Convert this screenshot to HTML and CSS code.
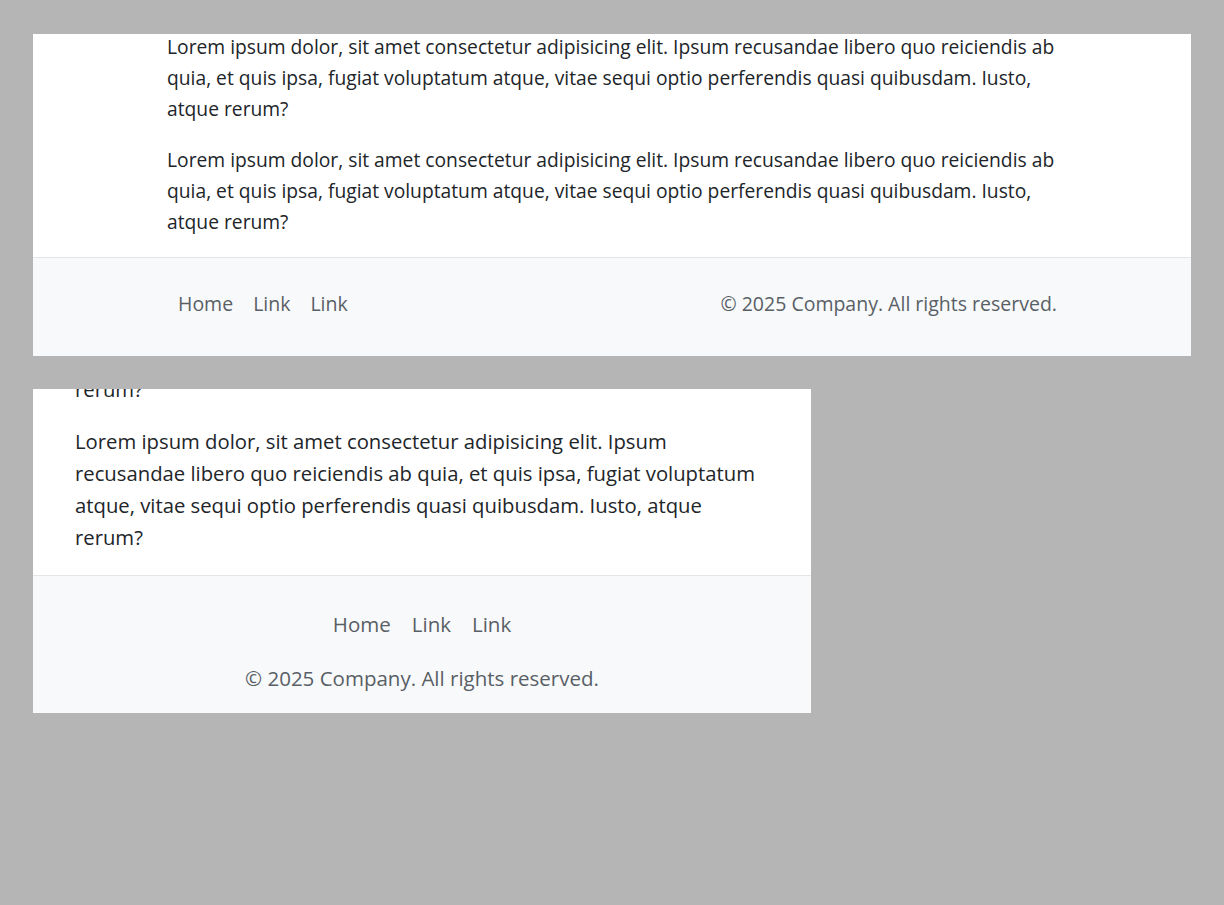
FILE: index.html
```html
<!DOCTYPE html>
<html lang="en">
<head>
<meta charset="utf-8">
<title>Footer previews</title>
<link rel="stylesheet" href="styles.css">
</head>
<body>
  <div class="frame frame-wide">
    <main class="content">
      <div class="container">
        <p>Lorem ipsum dolor, sit amet consectetur adipisicing elit. Ipsum recusandae libero quo reiciendis ab quia, et quis ipsa, fugiat voluptatum atque, vitae sequi optio perferendis quasi quibusdam. Iusto, atque rerum?</p>
        <p>Lorem ipsum dolor, sit amet consectetur adipisicing elit. Ipsum recusandae libero quo reiciendis ab quia, et quis ipsa, fugiat voluptatum atque, vitae sequi optio perferendis quasi quibusdam. Iusto, atque rerum?</p>
        <p>Lorem ipsum dolor, sit amet consectetur adipisicing elit. Ipsum recusandae libero quo reiciendis ab quia, et quis ipsa, fugiat voluptatum atque, vitae sequi optio perferendis quasi quibusdam. Iusto, atque rerum?</p>
      </div>
    </main>
    <footer class="footer">
      <div class="container footer-row">
        <nav class="footer-nav">
          <a href="#">Home</a>
          <a href="#">Link</a>
          <a href="#">Link</a>
        </nav>
        <p class="copyright">© 2025 Company. All rights reserved.</p>
      </div>
    </footer>
  </div>

  <div class="frame frame-narrow">
    <main class="content">
      <div class="container">
        <p>Lorem ipsum dolor, sit amet consectetur adipisicing elit. Ipsum recusandae libero quo reiciendis ab quia, et quis ipsa, fugiat voluptatum atque, vitae sequi optio perferendis quasi quibusdam. Iusto, atque rerum?</p>
        <p>Lorem ipsum dolor, sit amet consectetur adipisicing elit. Ipsum recusandae libero quo reiciendis ab quia, et quis ipsa, fugiat voluptatum atque, vitae sequi optio perferendis quasi quibusdam. Iusto, atque rerum?</p>
      </div>
    </main>
    <footer class="footer">
      <div class="container footer-col">
        <nav class="footer-nav">
          <a href="#">Home</a>
          <a href="#">Link</a>
          <a href="#">Link</a>
        </nav>
        <p class="copyright">© 2025 Company. All rights reserved.</p>
      </div>
    </footer>
  </div>
</body>
</html>
```

FILE: styles.css
```css
html, body {
  margin: 0;
  padding: 0;
}

body {
  background: #b5b5b5;
  font-family: "Open Sans", "Noto Sans", sans-serif;
  color: #212529;
  padding: 34px 33px 0;
  display: flex;
  flex-direction: column;
  align-items: flex-start;
  gap: 33px;
}

.frame {
  background: #ffffff;
  overflow: hidden;
  display: flex;
  flex-direction: column;
  justify-content: flex-end;
}

.frame > * {
  flex-shrink: 0;
}

.frame-wide {
  width: 1158px;
  height: 322px;
}

.frame-narrow {
  width: 778px;
  height: 324px;
}

.content p {
  margin: 0 0 20px;
}

.frame-wide .container {
  width: 890px;
  margin: 0 auto;
}

.frame-wide .content p {
  font-size: 19.25px;
  line-height: 31px;
}

.frame-narrow .container {
  margin: 0 42px;
}

.frame-narrow .content p {
  font-size: 20.27px;
  line-height: 32px;
}

.frame-narrow .content p:last-child {
  margin-bottom: 22px;
}

.footer {
  background: #f8f9fa;
  border-top: 1px solid #e3e6e9;
  color: #595f66;
}

.footer-nav {
  display: flex;
}

.footer-nav a {
  color: #595f66;
  text-decoration: none;
  padding: 8px 10.5px;
}

.copyright {
  margin: 0;
}

.footer-row {
  display: flex;
  justify-content: space-between;
  align-items: center;
  padding: 23px 0 29px;
  font-size: 19.5px;
  line-height: 30px;
}

.footer-row .footer-nav {
  margin-left: 1px;
}

.footer-row .footer-nav a {
  padding: 8px 10px;
}

.footer-col {
  display: flex;
  flex-direction: column;
  align-items: center;
  padding: 25px 0 20px;
  font-size: 20.5px;
  line-height: 30px;
}

.footer-col .copyright {
  margin-top: 16px;
}
```
